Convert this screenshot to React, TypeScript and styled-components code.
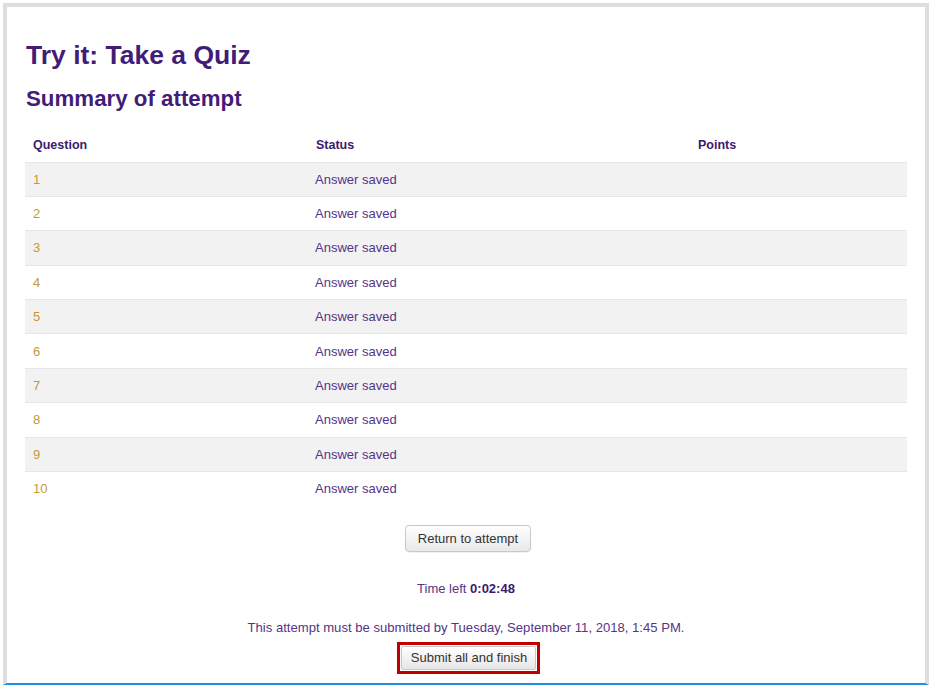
import React from "react";
import styled, { createGlobalStyle } from "styled-components";

const GlobalStyle = createGlobalStyle`
  html, body {
    margin: 0;
    padding: 0;
    background: #ffffff;
  }
  body {
    font-family: "Liberation Sans", Arial, sans-serif;
  }
`;

const rows = Array.from({ length: 10 }, (_, i) => ({
  number: i + 1,
  status: "Answer saved",
  points: "",
}));

export default function App() {
  return (
    <>
      <GlobalStyle />
      <Page>
        <Frame>
          <Title>Try it: Take a Quiz</Title>
          <Subtitle>Summary of attempt</Subtitle>
          <SummaryTable>
            <colgroup>
              <col style={{ width: 283 }} />
              <col style={{ width: 382 }} />
              <col />
            </colgroup>
            <thead>
              <tr>
                <HeadCell>Question</HeadCell>
                <HeadCell>Status</HeadCell>
                <HeadCell>Points</HeadCell>
              </tr>
            </thead>
            <tbody>
              {rows.map((row, i) => (
                <Row key={row.number} $striped={i % 2 === 0}>
                  <NumberCell>{row.number}</NumberCell>
                  <StatusCell>{row.status}</StatusCell>
                  <StatusCell>{row.points}</StatusCell>
                </Row>
              ))}
            </tbody>
          </SummaryTable>
          <Actions>
            <Button>Return to attempt</Button>
            <TimeLeft>
              Time left <strong>0:02:48</strong>
            </TimeLeft>
            <Notice>
              This attempt must be submitted by Tuesday, September 11, 2018, 1:45 PM.
            </Notice>
            <Highlight>
              <SubmitButton>Submit all and finish</SubmitButton>
            </Highlight>
          </Actions>
        </Frame>
      </Page>
    </>
  );
}

const Page = styled.div`
  padding: 3px 4px 0 3px;
  width: 933px;
  box-sizing: border-box;
`;

const Frame = styled.div`
  width: 926px;
  box-sizing: border-box;
  border-top: 4px solid #dedede;
  border-left: 4px solid #dedede;
  border-right: 4px solid #dedede;
  border-bottom: 2px solid #1b8fe0;
  padding: 30px 18px 9px 18px;
  display: flex;
  flex-direction: column;
`;

const Title = styled.h1`
  margin: 0 0 0 1px;
  font-size: 26.5px;
  line-height: 36px;
  font-weight: 700;
  color: #421c78;
`;

const Subtitle = styled.h2`
  margin: 13px 0 0 1px;
  font-size: 22.3px;
  line-height: 26px;
  font-weight: 700;
  color: #421c78;
`;

const SummaryTable = styled.table`
  margin-top: 16px;
  width: 882px;
  border-collapse: collapse;
  table-layout: fixed;
  font-size: 13px;
`;

const HeadCell = styled.th`
  height: 34px;
  padding: 0 8px;
  box-sizing: border-box;
  text-align: left;
  font-size: 12.5px;
  font-weight: 700;
  color: #3d1a70;
  vertical-align: middle;
`;

const Row = styled.tr<{ $striped: boolean }>`
  background: ${(p) => (p.$striped ? "#f2f2f2" : "#ffffff")};
  border-top: 1px solid #e6e6e6;
`;

const NumberCell = styled.td`
  height: 34.4px;
  padding: 0 8px;
  box-sizing: border-box;
  color: #c4993a;
  vertical-align: middle;
`;

const StatusCell = styled.td`
  height: 34.4px;
  padding: 0 7px;
  box-sizing: border-box;
  color: #553486;
  vertical-align: middle;
`;

const Actions = styled.div`
  display: flex;
  flex-direction: column;
  align-items: center;
  width: 882px;
`;

const Button = styled.button`
  margin: 19px 0 0 4px;
  height: 27px;
  padding: 0 12px;
  border: 1px solid #c8c8c8;
  border-radius: 4px;
  background: linear-gradient(#ffffff, #e8e8e8);
  font-family: "Liberation Sans", Arial, sans-serif;
  font-size: 13px;
  color: #333333;
  box-shadow: 0 1px 1px rgba(0, 0, 0, 0.06);
`;

const TimeLeft = styled.div`
  margin-top: 29px;
  font-size: 13px;
  line-height: 15px;
  color: #553486;

  strong {
    color: #3d1a70;
  }
`;

const Notice = styled.div`
  margin-top: 24px;
  font-size: 13.1px;
  line-height: 15px;
  color: #553486;
`;

const Highlight = styled.div`
  margin: 7px 0 0 5px;
  border: 3px solid #c00000;
  padding: 1px;
  display: flex;
`;

const SubmitButton = styled.button`
  height: 24px;
  padding: 0 8px 0 9px;
  border: 1px solid #c8c8c8;
  border-radius: 2px;
  background: linear-gradient(#ffffff, #e6e6e6);
  font-family: "Liberation Sans", Arial, sans-serif;
  font-size: 13px;
  color: #333333;
`;
